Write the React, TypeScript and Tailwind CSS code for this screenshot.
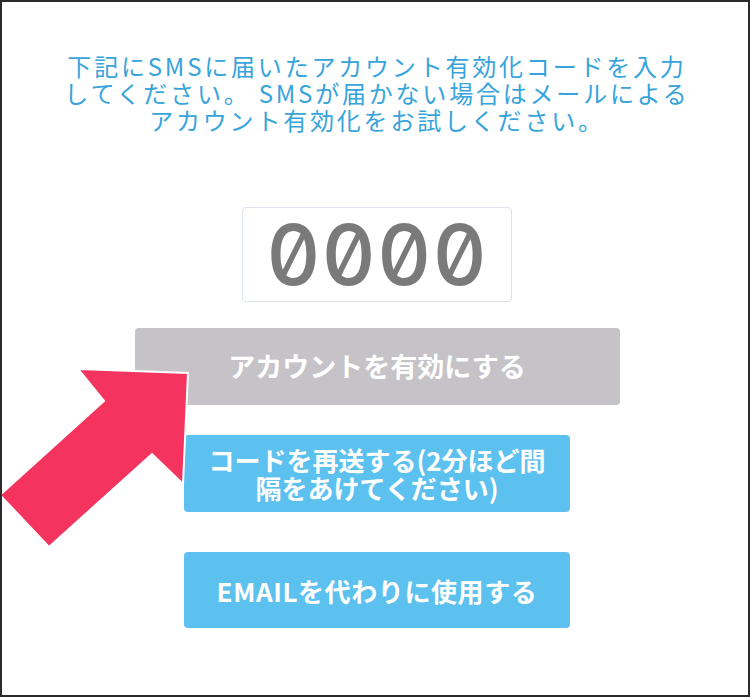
import React from 'react';

const Arrow: React.FC = () => (
  <svg
    className="absolute left-0 top-[360px] pointer-events-none"
    width="200"
    height="200"
    viewBox="0 360 200 200"
  >
    <polygon
      points="76,367 186,371 181,482 150,452 47,545 -2,493 102,399"
      fill="#f4345f"
      stroke="#ffffff"
      strokeWidth="2"
    />
  </svg>
);

const App: React.FC = () => {
  return (
    <div className="relative w-[750px] h-[697px] bg-white border-2 border-[#2b2b2b] overflow-hidden font-['Noto_Sans_CJK_JP','Noto_Sans',sans-serif]">
      <div className="flex flex-col items-center pl-1">
        <div className="mt-[50px] flex flex-col items-center text-[24px] leading-[27px] tracking-[2.8px] text-[#37a4db]">
          <p>下記にSMSに届いたアカウント有効化コードを入力</p>
          <p>してください。 SMSが届かない場合はメールによる</p>
          <p>アカウント有効化をお試しください。</p>
        </div>

        <div className="mt-[74px] w-[270px] h-[95px] border border-[#dde3ea] rounded-[4px] flex items-center justify-center">
          <span className="font-['Inter',sans-serif] text-[84px] leading-none font-medium tracking-[1px] text-[#7a7a7a] slashed-zero tabular-nums">
            0000
          </span>
        </div>

        <button className="mt-[26px] w-[485px] h-[77px] rounded-[4px] bg-[#c5c3c7] text-white text-[27px] font-semibold flex items-center justify-center">
          アカウントを有効にする
        </button>

        <button className="mt-[30px] w-[386px] h-[77px] rounded-[4px] bg-[#5cc1ee] text-white text-[26px] leading-[28px] font-bold flex flex-col items-center justify-center">
          <span>コードを再送する(2分ほど間</span>
          <span>隔をあけてください)</span>
        </button>

        <button className="mt-[40px] w-[386px] h-[76px] rounded-[4px] bg-[#5cc1ee] text-white text-[26px] tracking-[0.6px] font-bold flex items-center justify-center">
          EMAILを代わりに使用する
        </button>
      </div>

      <Arrow />
    </div>
  );
};

export default App;
